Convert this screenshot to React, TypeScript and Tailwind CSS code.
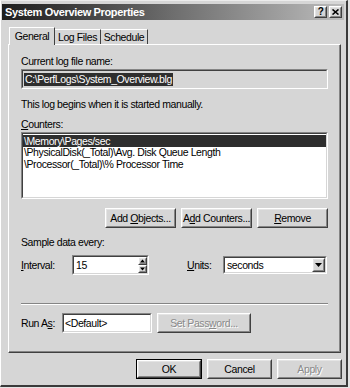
import React from 'react';

const Raised: React.FC<{ className?: string; children?: React.ReactNode; def?: boolean }> = ({ className = '', children, def }) => (
  <div className={`${def ? 'border border-black' : ''} ${className}`}>
    <div className="h-full border border-t-white border-l-white border-r-[#404040] border-b-[#404040]">
      <div className="h-full flex items-center justify-center border border-t-[#e4e4e4] border-l-[#e4e4e4] border-r-[#858585] border-b-[#858585] bg-[#d6d6d6]">
        {children}
      </div>
    </div>
  </div>
);

const Sunken: React.FC<{ className?: string; children?: React.ReactNode; bg?: string }> = ({ className = '', children, bg = 'bg-white' }) => (
  <div className={`border border-t-[#858585] border-l-[#858585] border-r-white border-b-white ${className}`}>
    <div className={`h-full border border-t-[#404040] border-l-[#404040] border-r-[#d6d6d6] border-b-[#d6d6d6] ${bg}`}>{children}</div>
  </div>
);

const SmallArrow: React.FC<{ up?: boolean }> = ({ up }) => (
  <svg width="7" height="4" viewBox="0 0 7 4">
    <path d={up ? 'M3.5 0 L7 4 L0 4 Z' : 'M0 0 L7 0 L3.5 4 Z'} fill="#000" />
  </svg>
);

const counters = [
  '\\Memory\\Pages/sec',
  '\\PhysicalDisk(_Total)\\Avg. Disk Queue Length',
  '\\Processor(_Total)\\% Processor Time',
];

const App: React.FC = () => {
  return (
    <div className="w-[350px] h-[388px] bg-[#e4e4e4] font-['Liberation_Sans',Arial,sans-serif] text-[10.5px] leading-none tracking-[-0.4px] text-black whitespace-nowrap">
      <div className="w-[348px] h-[387px] flex flex-col bg-[#d6d6d6] border-l border-t border-l-white border-t-[#ececec] border-r-2 border-r-[#3a3a3a] border-b-2 border-b-[#3a3a3a]">
        {/* Title bar */}
        <div className="mt-[3px] ml-[1px] mr-[2px] h-[16px] flex items-center justify-between bg-gradient-to-r from-[#1e1e1e] via-[#6e6e6e] to-[#bdbdbd]">
          <span className="pl-[3px] text-white font-bold text-[11px] tracking-[-0.35px]">System Overview Properties</span>
          <div className="flex gap-[2px] pr-[2px]">
            <Raised className="w-[13px] h-[12px]">
              <span className="font-bold text-[10px] leading-none">?</span>
            </Raised>
            <Raised className="w-[13px] h-[12px]">
              <svg width="7" height="6" viewBox="0 0 7 6">
                <path d="M0.5 0.5 L6.5 5.5 M6.5 0.5 L0.5 5.5" stroke="#000" strokeWidth="1.6" />
              </svg>
            </Raised>
          </div>
        </div>

        {/* Tabs */}
        <div className="mt-[7px] ml-[8px] h-[17px] flex items-end relative z-10">
          <div className="w-[46px] h-[18px] -mb-[1px] pt-[3px] text-center bg-[#d6d6d6] border-t border-l border-r border-t-white border-l-white border-r-[#404040]">
            General
          </div>
          <div className="w-[46px] h-[15px] pt-[2px] text-center border-t border-r border-t-white border-r-[#404040]">
            Log Files
          </div>
          <div className="w-[47px] h-[15px] pt-[2px] text-center border-t border-r border-t-white border-r-[#404040]">
            Schedule
          </div>
        </div>

        {/* Panel */}
        <div className="ml-[7px] mr-[5px] h-[309px] border border-t-white border-l-white border-r-[#404040] border-b-[#404040]">
          <div className="h-full border-r border-b border-r-[#858585] border-b-[#858585] pl-[12px] pr-[11px] flex flex-col">
            <div className="mt-[10px] h-[12px] flex items-center">Current log file name:</div>
            <Sunken className="mt-[2px] h-[20px]" bg="bg-[#d6d6d6]">
              <div className="h-full flex items-center pl-[1px]">
                <span className="bg-[#2e2e2e] text-white px-[1px] h-[13px] flex items-center">C:\PerfLogs\System_Overview.blg</span>
              </div>
            </Sunken>
            <div className="mt-[9px] h-[12px] flex items-center">This log begins when it is started manually.</div>
            <div className="mt-[8px] h-[12px] flex items-center">
              <span><u>C</u>ounters:</span>
            </div>
            <Sunken className="mt-[2px] h-[67px]">
              <div className="flex flex-col pt-[1px]">
                {counters.map((c, i) => (
                  <div key={c} className={`h-[11.5px] flex items-center pl-[1px] ${i === 0 ? 'bg-[#2e2e2e] text-white' : ''}`}>
                    {c}
                  </div>
                ))}
              </div>
            </Sunken>
            <div className="mt-[9px] flex justify-end gap-[5px]">
              <Raised className="w-[71px] h-[20px]">
                <span>Add <u>O</u>bjects...</span>
              </Raised>
              <Raised className="w-[71px] h-[20px]">
                <span>A<u>d</u>d Counters...</span>
              </Raised>
              <Raised className="w-[71px] h-[20px]">
                <span><u>R</u>emove</span>
              </Raised>
            </div>
            <div className="mt-[8px] h-[12px] flex items-center">Sample data every:</div>
            <div className="mt-[7px] h-[20px] flex items-center">
              <span className="w-[51px]"><u>I</u>nterval:</span>
              <Sunken className="w-[77px] h-[20px]">
                <div className="h-full flex items-center">
                  <span className="flex-1 pl-[2px]">15</span>
                  <div className="w-[9px] h-full flex flex-col">
                    <Raised className="h-[8px] w-[9px]"><SmallArrow up /></Raised>
                    <Raised className="h-[8px] w-[9px]"><SmallArrow /></Raised>
                  </div>
                </div>
              </Sunken>
              <span className="ml-[38px] w-[36px]"><u>U</u>nits:</span>
              <Sunken className="w-[104px] h-[18px]">
                <div className="h-full flex items-center">
                  <span className="flex-1 pl-[2px]">seconds</span>
                  <Raised className="w-[13px] h-full">
                    <svg width="7" height="4" viewBox="0 0 7 4">
                      <path d="M0 0 L7 0 L3.5 4 Z" fill="#000" />
                    </svg>
                  </Raised>
                </div>
              </Sunken>
            </div>
            <div className="mt-[28px] border-t border-b border-t-[#858585] border-b-white" />
            <div className="mt-[8px] h-[20px] flex items-center">
              <span className="w-[41px]">Run A<u>s</u>:</span>
              <Sunken className="w-[90px] h-[20px]">
                <div className="h-full flex items-center pl-[1px]">&lt;Default&gt;</div>
              </Sunken>
              <Raised className="ml-[5px] w-[94px] h-[20px]">
                <span className="text-[#8a8a8a] [text-shadow:1px_1px_0_#fff]">Set Pass<u>w</u>ord...</span>
              </Raised>
            </div>
          </div>
        </div>

        {/* Bottom buttons */}
        <div className="mt-[6px] mr-[4px] flex justify-end gap-[5px]">
          <Raised def className="w-[66px] h-[20px]">OK</Raised>
          <Raised className="w-[65px] h-[20px]">Cancel</Raised>
          <Raised className="w-[65px] h-[20px]">
            <span className="text-[#8a8a8a] [text-shadow:1px_1px_0_#fff]">Apply</span>
          </Raised>
        </div>
      </div>
    </div>
  );
};

export default App;
